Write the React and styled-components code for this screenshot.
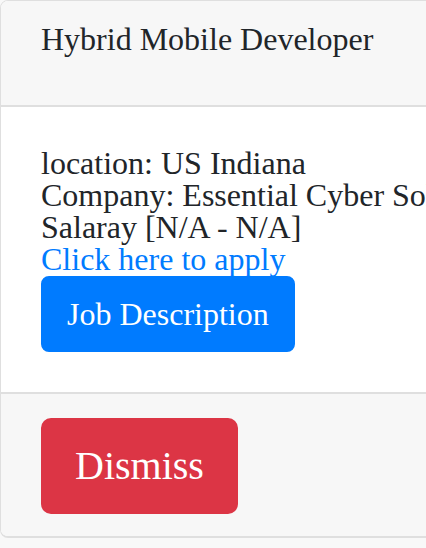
import React from "react";
import styled, { createGlobalStyle } from "styled-components";

const Global = createGlobalStyle`
  html, body {
    margin: 0;
    padding: 0;
    background: #f8f8f8;
    overflow: hidden;
  }
  body {
    font-family: "Liberation Serif", "Times New Roman", serif;
    color: #212529;
  }
`;

const Card = styled.div`
  width: 760px;
  border: 1px solid #dfdfdf;
  border-bottom-width: 2px;
  border-radius: 8px;
  background: #fff;
  overflow: hidden;
`;

const Header = styled.div`
  background: #f7f7f7;
  border-bottom: 2px solid #dfdfdf;
  padding: 22px 40px 50px;
  font-size: 32px;
  line-height: 32px;
`;

const Body = styled.div`
  padding: 40px;
  display: flex;
  flex-direction: column;
  align-items: flex-start;
  font-size: 32px;
  line-height: 32px;
`;

const Line = styled.div`
  white-space: nowrap;
`;

const Link = styled.a`
  color: #007bff;
  text-decoration: none;
`;

const Button = styled.button`
  font-family: "Liberation Serif", "Times New Roman", serif;
  color: #fff;
  background: ${(p) => (p.$variant === "danger" ? "#dc3545" : "#007bff")};
  border: 2px solid ${(p) => (p.$variant === "danger" ? "#dc3545" : "#007bff")};
  border-radius: ${(p) => (p.$large ? "10px" : "8px")};
  padding: ${(p) => (p.$large ? "16px 32px" : "12px 24px")};
  font-size: ${(p) => (p.$large ? "40px" : "32px")};
  line-height: ${(p) => (p.$large ? "60px" : "48px")};
  margin-top: ${(p) => p.$mt || 0}px;
  cursor: pointer;
`;

const Footer = styled.div`
  background: #f7f7f7;
  border-top: 2px solid #dfdfdf;
  padding: 24px 40px 22px;
`;

export default function App() {
  return (
    <>
      <Global />
      <Card>
        <Header>Hybrid Mobile Developer</Header>
        <Body>
          <Line>location: US Indiana</Line>
          <Line>Company: Essential Cyber Solutions</Line>
          <Line>Salaray [N/A - N/A]</Line>
          <Line>
            <Link href="#">Click here to apply</Link>
          </Line>
          <Button $mt={1}>Job Description</Button>
        </Body>
        <Footer>
          <Button $variant="danger" $large>
            Dismiss
          </Button>
        </Footer>
      </Card>
    </>
  );
}
